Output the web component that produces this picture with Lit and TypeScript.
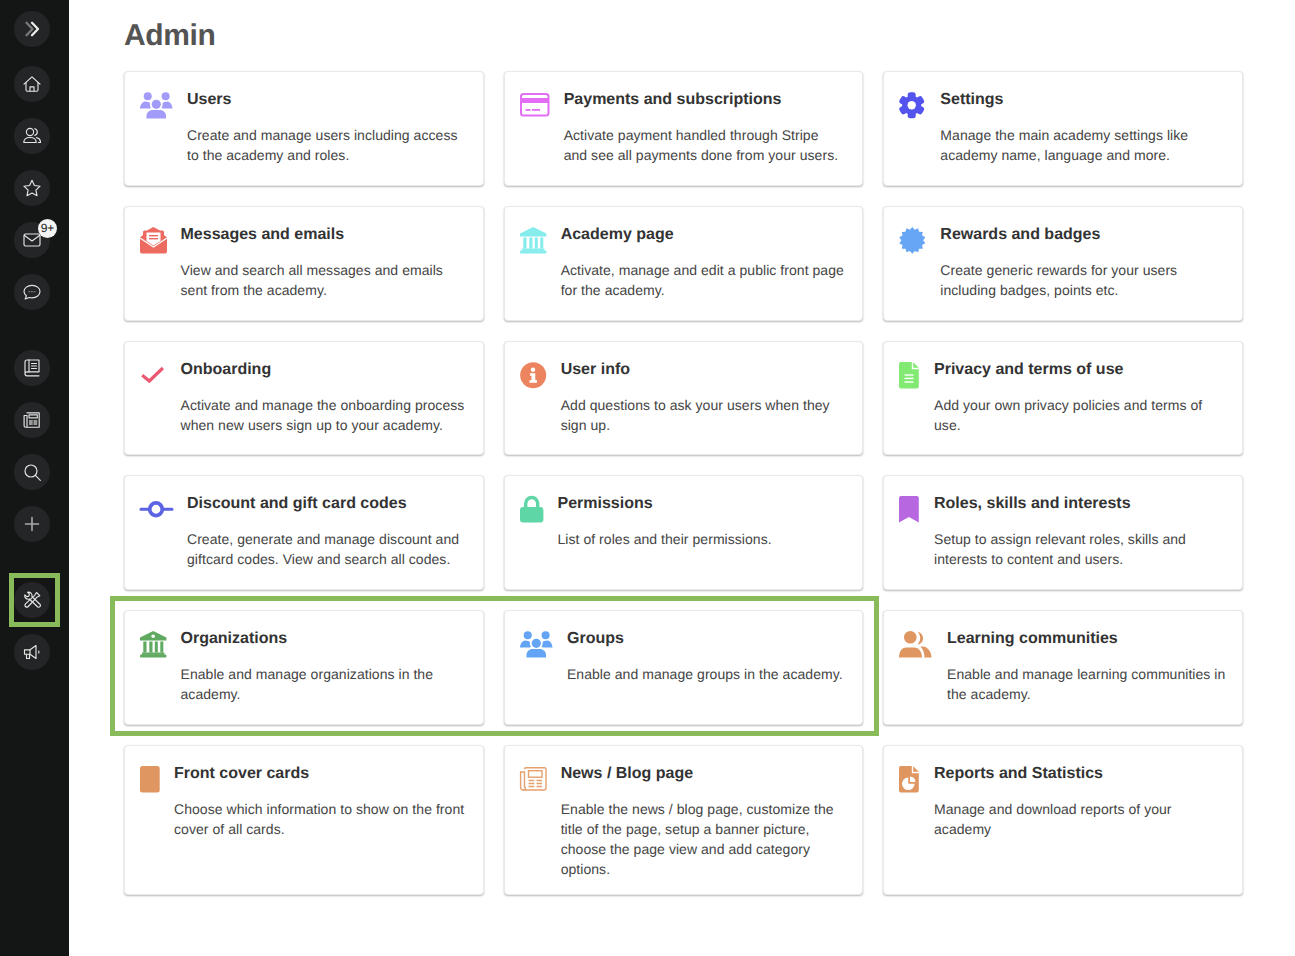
import { LitElement, html, css, svg, TemplateResult } from "lit";
import { customElement } from "lit/decorators.js";

const burst = (() => {
  const pts: string[] = [];
  const n = 14;
  for (let i = 0; i < n * 2; i++) {
    const r = i % 2 ? 10.9 : 13.4;
    const a = (Math.PI * i) / n - Math.PI / 2;
    pts.push(`${(13.3 + r * Math.cos(a)).toFixed(2)},${(13.3 + r * Math.sin(a)).toFixed(2)}`);
  }
  return pts.join(" ");
})();

const people = (c: string) => svg`<g fill="${c}">
  <circle cx="7.7" cy="4.3" r="4"/><circle cx="25.6" cy="4.3" r="4"/><circle cx="16.3" cy="12.3" r="4.6"/>
  <path d="M0 16.5c0-3 2.2-7 5-7 2.800 0 4 .8 5 1.800-.4 1.600 0 3.200 1 4.300-.4.3-.8.600-1.100.9z"/>
  <path d="M32.500 16.500c0-3-2.200-7-5-7-2.800 0-4 .8-5 1.800.4 1.600 0 3.200-1 4.300.4.3.8.600 1.100.9z"/>
  <path d="M6.500 26.500v-2.500c0-3.500 3-6 6-6h7.500c3 0 6 2.500 6 6v2.500z"/></g>`;

const temple = (c: string, dot: boolean) => svg`<g fill="${c}">
  <path d="M13.200 0 26.400 6.500V9.500H0V6.500z"/>
  <rect x="3.300" y="10.500" width="3.200" height="11"/><rect x="9.300" y="10.500" width="3.200" height="11"/>
  <rect x="14.800" y="10.500" width="3" height="11"/><rect x="20.300" y="10.500" width="3" height="11"/>
  <rect x="2" y="21.500" width="22.400" height="2.300"/><rect y="23.500" width="26.400" height="3" rx="1"/>
  ${dot ? svg`<circle cx="13.200" cy="5.300" r="1.800" fill="#fff"/>` : ""}</g>`;

interface Item { t: string; d: string; w: number; v: number; i: TemplateResult; }

const items: Item[] = [
  { t: "Users", d: "Create and manage users including access to the academy and roles.", w: 32, v: 32.5, i: people("#a29bfa") },
  { t: "Payments and subscriptions", d: "Activate payment handled through Stripe\nand see all payments done from your users.", w: 29, v: 29.5,
    i: svg`<g fill="none" stroke="#e36df5" stroke-width="2"><rect x="1" y="2" width="27.500" height="21.500" rx="2.500"/></g>
      <g fill="#e36df5"><rect x="1" y="6" width="27.500" height="5"/><rect x="5.500" y="17" width="5" height="1.800"/><rect x="12" y="17" width="8" height="1.800"/></g>` },
  { t: "Settings", d: "Manage the main academy settings like academy name, language and more.", w: 26, v: 25.5,
    i: svg`<g fill="#5353ee"><circle cx="12.700" cy="13.250" r="9.500"/>
      ${[0, 60, 120, 180, 240, 300].map((a) => svg`<rect x="8.700" y="0.200" width="8" height="7" rx="2.500" transform="rotate(${a} 12.700 13.250)"/>`)}</g>
      <circle cx="12.700" cy="13.250" r="4.200" fill="#fff"/>` },
  { t: "Messages and emails", d: "View and search all messages and emails sent from the academy.", w: 25.5, v: 27,
    i: svg`<path fill="#ec6a5f" d="M13.300 0 20 3.500h2.500a1.500 1.500 0 0 1 1.500 1.500v3l3 2.500v14a2 2 0 0 1-2 2H2a2 2 0 0 1-2-2v-14l3-2.500V5a1.500 1.500 0 0 1 1.500-1.500H7z"/>
      <path fill="#fff" d="M6.500 5.500h14V14l-7 4.500-7-4.500z"/><path fill="none" stroke="#fff" stroke-width="1.300" d="M0 11l13.500 9L27 11"/>
      <rect x="9" y="8" width="9" height="1.400" fill="#ec6a5f"/><rect x="9" y="11" width="9" height="1.400" fill="#ec6a5f"/>` },
  { t: "Academy page", d: "Activate, manage and edit a public front page for the academy.", w: 26, v: 26.4, i: temple("#86ecec", false) },
  { t: "Rewards and badges", d: "Create generic rewards for your users including badges, points etc.", w: 26, v: 26.6,
    i: svg`<polygon points="${burst}" fill="#66a6f5"/>` },
  { t: "Onboarding", d: "Activate and manage the onboarding process when new users sign up to your academy.", w: 25.5, v: 26.5,
    i: svg`<path d="M2.200 13.300 9.300 19 22.900 6" fill="none" stroke="#ea5a72" stroke-width="3.200"/>` },
  { t: "User info", d: "Add questions to ask your users when they sign up.", w: 26, v: 26.5,
    i: svg`<circle cx="13.200" cy="13.250" r="13" fill="#ec855f"/><circle cx="13" cy="7.700" r="2.200" fill="#fff"/>
      <path fill="#fff" d="M10 11.300h5.300v7h1.700v2.500H9.500v-2.500h2v-4.600H10z"/>` },
  { t: "Privacy and terms of use", d: "Add your own privacy policies and terms of use.", w: 19.7, v: 19.8,
    i: svg`<path fill="#82ea72" d="M2 0h10.800v7.200h7V24.500a2 2 0 0 1-2 2H2a2 2 0 0 1-2-2V2a2 2 0 0 1 2-2z"/>
      <path fill="#82ea72" d="M14.200 .2 19.800 5.800H14.200z"/>
      <g fill="#fff"><rect x="5.500" y="12.300" width="9" height="1.400"/><rect x="5.500" y="15.700" width="9" height="1.400"/><rect x="5.500" y="19.300" width="9" height="1.400"/></g>` },
  { t: "Discount and gift card codes", d: "Create, generate and manage discount and giftcard codes. View and search all codes.", w: 32, v: 32.5,
    i: svg`<path d="M1 13.250h31" stroke="#5d64e4" stroke-width="3" stroke-linecap="round"/>
      <circle cx="16" cy="13.250" r="6.300" fill="#fff" stroke="#5d64e4" stroke-width="3.800"/>` },
  { t: "Permissions", d: "List of roles and their permissions.", w: 22.8, v: 23.5,
    i: svg`<rect y="11" width="23.400" height="15.500" rx="3" fill="#5ed6a6"/>
      <path d="M5.700 12V7.500a6 6 0 0 1 12 0V12" fill="none" stroke="#5ed6a6" stroke-width="3.400"/>` },
  { t: "Roles, skills and interests", d: "Setup to assign relevant roles, skills and interests to content and users.", w: 19.7, v: 19.8,
    i: svg`<path fill="#b768e0" d="M2 0h15.800a2 2 0 0 1 2 2v24.500L9.900 21 0 26.500V2a2 2 0 0 1 2-2z"/>` },
  { t: "Organizations", d: "Enable and manage organizations in the academy.", w: 25.5, v: 26.5, i: temple("#5fa960", true) },
  { t: "Groups", d: "Enable and manage groups in the academy.", w: 32.3, v: 32.5, i: people("#63a4f5") },
  { t: "Learning communities", d: "Enable and manage learning communities in the academy.", w: 32.7, v: 32.7,
    i: svg`<g fill="#df9660"><circle cx="11.300" cy="6.300" r="6.300"/>
      <path d="M0 26.500c0-6 3-10 7-10h8.500c4 0 7.500 4 7.500 10z"/>
      <path d="M18.500 .8a6.400 6.400 0 0 1 0 12.700c1.600-1.600 2.700-3.900 2.700-6.400 0-2.500-1.100-4.700-2.700-6.300z"/>
      <path d="M21.500 15.500h2c5 0 9 5 9 11H25.500c0-4.500-1.500-8.500-4-11z"/></g>` },
  { t: "Front cover cards", d: "Choose which information to show on the front cover of all cards.", w: 19, v: 19.8,
    i: svg`<rect width="19.700" height="26.500" rx="2.500" fill="#df9660"/>` },
  { t: "News / Blog page", d: "Enable the news / blog page, customize the title of the page, setup a banner picture, choose the page view and add category options.", w: 26, v: 26.5,
    i: svg`<g fill="none" stroke="#e5a06e" stroke-width="1.400">
      <path d="M4.500 3.200a1.500 1.500 0 0 1 1.500-1.500h18.500a1.500 1.500 0 0 1 1.500 1.500V22a2 2 0 0 1-2 2H3a2.400 2.400 0 0 1-2.400-2.400V6h3.900V21a1.500 1.500 0 0 1-1.500 3"/>
      <rect x="8.500" y="4.700" width="13.500" height="6.500"/>
      <path d="M8.500 14.500h5.800M16.500 14.500h5.500M8.500 17.500h5.800M16.500 17.500h5.500M8.500 20.500h5.800M16.500 20.500h5.500"/></g>` },
  { t: "Reports and Statistics", d: "Manage and download reports of your academy", w: 19.7, v: 19.8,
    i: svg`<path fill="#df9660" d="M2 0h10.800v7.200h7V24.500a2 2 0 0 1-2 2H2a2 2 0 0 1-2-2V2a2 2 0 0 1 2-2z"/>
      <path fill="#df9660" d="M14.200 .2 19.800 5.800H14.200z"/>
      <path fill="#fff" d="M9.300 11.500v6.300h6.300a6.300 6.300 0 1 1-6.300-6.300z"/><path fill="#fff" d="M11 10.500a6 6 0 0 1 5.500 5.600H11z"/>` },
];

const nav = {
  chevrons: svg`<path d="M4.500 3.800 10.500 10 4.500 16.200" stroke="#7a7a7a" stroke-width="2.300"/><path d="M10 3.800 16 10 10 16.200" stroke="#eee" stroke-width="2.300"/>`,
  home: svg`<path d="M2 10.200 10 2.800l8 7.400"/><path d="M4 8.500v7.200a1.500 1.500 0 0 0 1.500 1.500h9a1.500 1.500 0 0 0 1.500-1.500V8.500"/><path d="M8 17v-4.200h4V17"/>`,
  users: svg`<circle cx="8" cy="6" r="3.600"/><path d="M1.800 16.500c0-3.500 2.700-5 6.200-5s6.200 1.500 6.200 5z"/><path d="M12.800 2.700a3.500 3.500 0 0 1 0 6.700"/><path d="M14.500 11.600c2.300.5 4 2 4 4.900h-2.200"/>`,
  star: svg`<path d="M10 2.300l2.400 5.200 5.700.7-4.200 3.900 1.100 5.600L10 15l-5 2.700 1.100-5.600L1.900 8.200l5.700-.7z"/>`,
  mail: svg`<rect x="2" y="4" width="16" height="12" rx="1.500"/><path d="M2.500 5.500 10 11l7.500-5.500"/>`,
  chat: svg`<path d="M10 3.300c4.500 0 8 2.800 8 6.300s-3.500 6.300-8 6.300c-1 0-2-.1-2.900-.4L3.200 17l1.200-3.300C3 12.600 2 11.200 2 9.600c0-3.500 3.500-6.300 8-6.300z"/><path d="M7 9.700h.8M9.600 9.700h.8M12.200 9.700h.8" stroke="#999"/>`,
  book: svg`<path d="M3 15.500V4a2 2 0 0 1 2-2H17V13.800H5a2 2 0 0 0 0 4H17"/><path d="M7 2v11.800"/><path d="M9.500 5.500h5M9.500 8h5M9.500 10.500h5"/>`,
  news: svg`<path d="M5 2.800h12.200v14.400H3.600a1.500 1.500 0 0 1-1.500-1.500V5.500H5v11"/><rect x="7" y="4.800" width="8.300" height="3" stroke="#ddd"/><rect x="7" y="10" width="3.700" height="5" fill="#999" stroke="none"/><rect x="11.500" y="10" width="3.700" height="5" fill="#999" stroke="none"/>`,
  search: svg`<circle cx="9" cy="9" r="6"/><path d="M13.400 13.400 18.300 18.300"/>`,
  plus: svg`<path d="M10 3.500v13M3.500 10h13" stroke="#aaa" stroke-width="1.600"/>`,
  tools: svg`<path d="M14.500 2.500l3.300 3.200-3 1.600L6.200 16.500a1.900 1.900 0 0 1-2.700-2.700l9.200-8.500z"/><path d="M2.800 4.800a3.500 3.500 0 0 0 4.500 4.200l8.500 8a1.800 1.800 0 0 0 2.400-2.500L10 6.700a3.700 3.700 0 0 0-4.500-4.500l1.900 2-.6 1.900-2 .6z"/>`,
  mega: svg`<path d="M2.500 7.800H8l6-4.300v13L8 12.200H2.500z"/><path d="M4.500 12.200v4.300h3v-4.300M8 7.800v4.400"/><path d="M16.800 9v2"/>`,
};

@customElement("app-root")
export class AppRoot extends LitElement {
  static styles = css`
    :host { display: block; font-family: "Liberation Sans", Arial, sans-serif; background: #fff; text-rendering: geometricPrecision; }
    .app { display: flex; position: relative; min-height: 956px; }
    .side { width: 69px; flex: none; background: #141616; box-sizing: border-box; padding: 11px 0 0 14px; display: flex; flex-direction: column; gap: 40px; }
    .group { display: flex; flex-direction: column; gap: 16px; }
    .first { margin-bottom: 3px; }
    .btn { width: 36px; height: 36px; border-radius: 50%; background: #232526; display: flex; align-items: center; justify-content: center; position: relative; }
    .btn svg { width: 20px; height: 20px; fill: none; stroke: #e6e6e6; stroke-width: 1.150; stroke-linejoin: round; stroke-linecap: round; }
    .badge { position: absolute; left: 24px; top: -3px; width: 19px; height: 19px; border-radius: 50%; background: #f4f4f4; color: #222; font-size: 12px; line-height: 19px; text-align: center; }
    main { flex: 1; padding: 0 52px 0 55px; min-width: 0; }
    h1 { margin: 0; font-size: 30px; letter-spacing: -0.400px; line-height: 34px; padding-top: 19px; height: 71px; box-sizing: border-box; font-weight: 700; color: #545454; }
    .grid { display: grid; grid-template-columns: repeat(3, 1fr); gap: 20px; }
    .card { box-sizing: border-box; min-height: 114.800px; background: #fff; border: 1px solid #e9e9e9; border-radius: 4px; box-shadow: 0 1px 2px rgba(0, 0, 0, 0.28); padding: 15px; display: flex; gap: 15px; align-items: flex-start; }
    .slot { flex: none; height: 26.500px; margin-top: 5px; }
    .icon { height: 26.500px; display: block; overflow: visible; }
    .body { flex: 1; min-width: 0; }
    h3 { margin: 0; padding-top: 2px; font-size: 16px; line-height: 22px; font-weight: 700; color: #333; }
    p { margin: 14px 0 0; font-size: 14px; line-height: 20px; letter-spacing: 0.050px; color: #444; white-space: pre-line; }
    .mark { position: absolute; box-sizing: border-box; border: 5px solid #8abb5b; pointer-events: none; }
    .mark.a { left: 9px; top: 573px; width: 51px; height: 54px; }
    .mark.b { left: 109.500px; top: 596px; width: 769.500px; height: 140px; }
  `;

  private btn(icon: TemplateResult, badge = "") {
    return html`<div class="btn"><svg viewBox="0 0 20 20">${icon}</svg>${badge ? html`<span class="badge">${badge}</span>` : ""}</div>`;
  }

  render() {
    return html`<div class="app">
      <nav class="side">
        <div class="group">
          <div class="first">${this.btn(nav.chevrons)}</div>
          ${this.btn(nav.home)}${this.btn(nav.users)}${this.btn(nav.star)}${this.btn(nav.mail, "9+")}${this.btn(nav.chat)}
        </div>
        <div class="group">${this.btn(nav.book)}${this.btn(nav.news)}${this.btn(nav.search)}${this.btn(nav.plus)}</div>
        <div class="group">${this.btn(nav.tools)}${this.btn(nav.mega)}</div>
      </nav>
      <main>
        <h1>Admin</h1>
        <div class="grid">
          ${items.map((it) => html`<section class="card">
            <div class="slot" style="width:${it.w}px"><svg class="icon" style="width:${it.v}px" viewBox="0 0 ${it.v} 26.500">${it.i}</svg></div>
            <div class="body"><h3>${it.t}</h3><p>${it.d}</p></div>
          </section>`)}
        </div>
      </main>
      <div class="mark a"></div>
      <div class="mark b"></div>
    </div>`;
  }
}
